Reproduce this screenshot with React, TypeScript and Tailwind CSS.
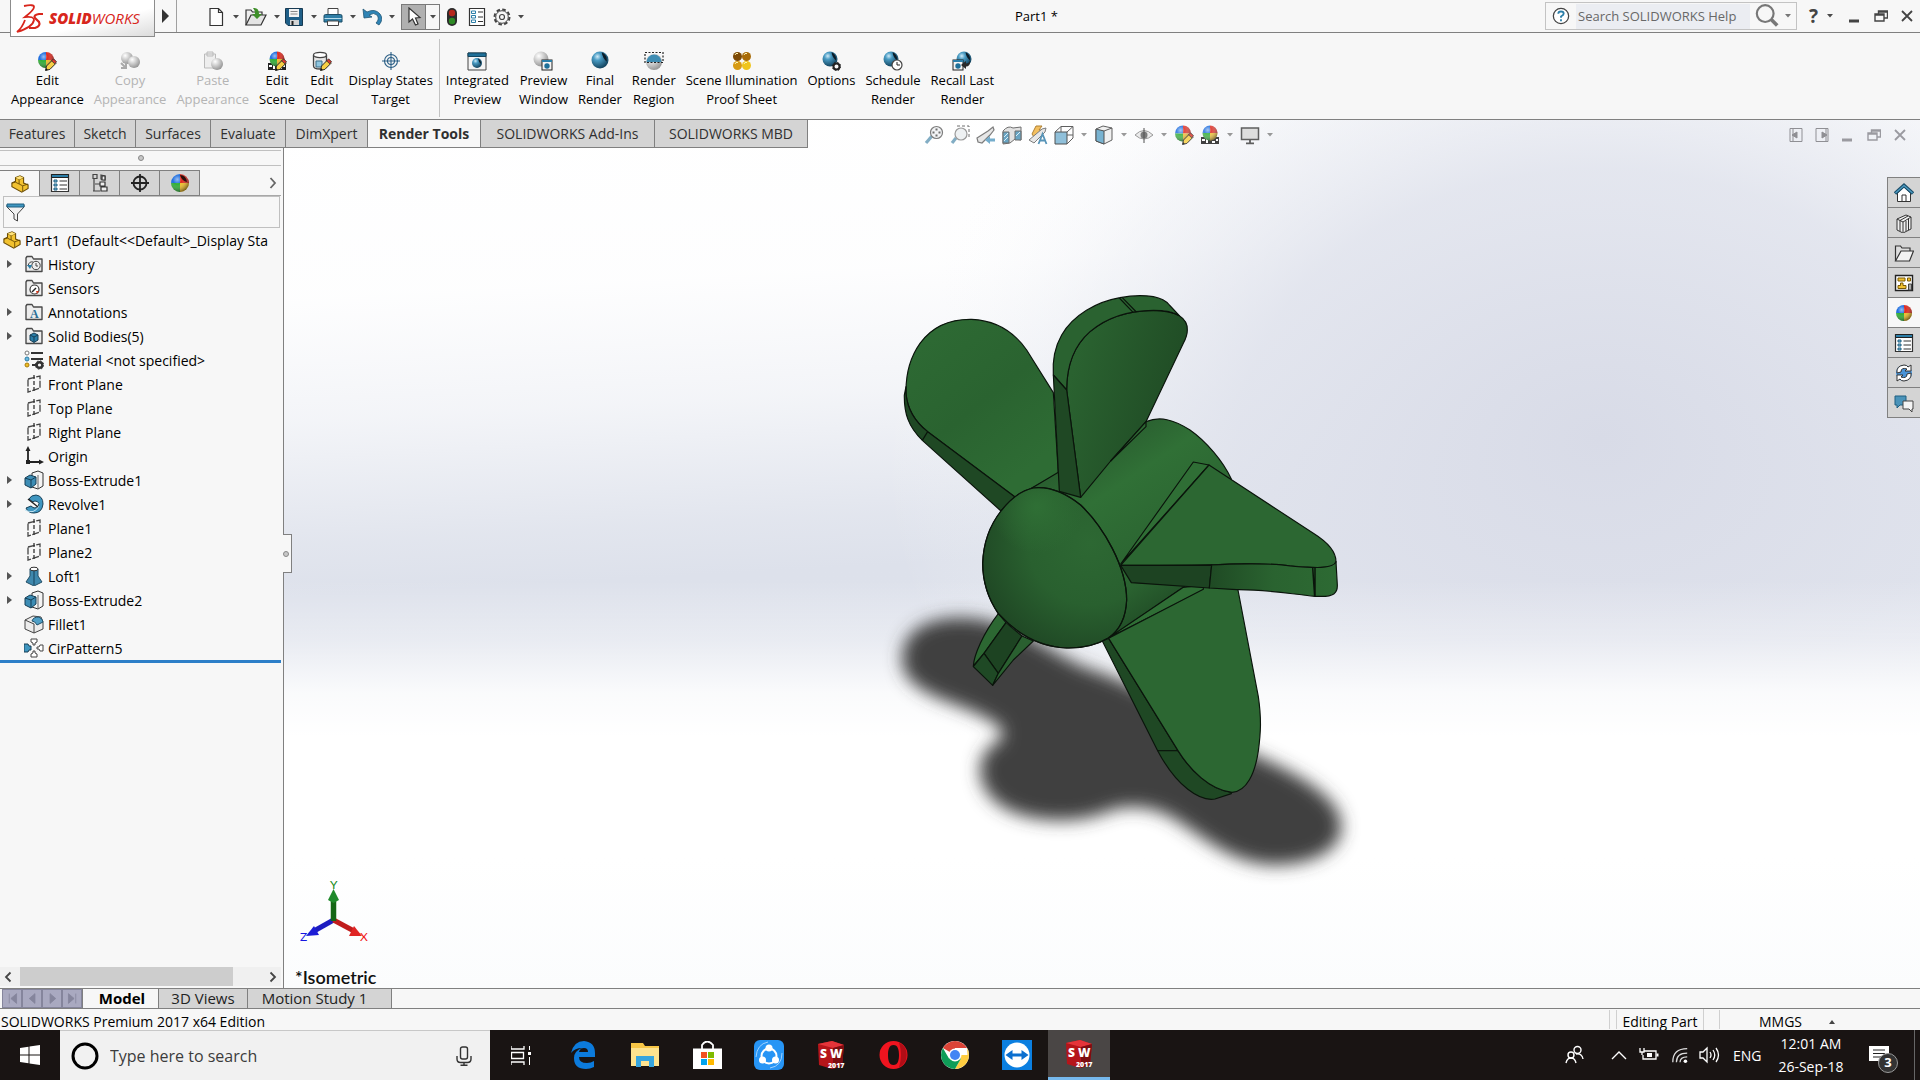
import type { ReactNode } from "react";

type IcoProps = { children: ReactNode; className?: string; box?: string };

const Ico = ({ children, className = "size-5", box = "0 0 20 20" }: IcoProps) => (
  <svg viewBox={box} className={`shrink-0 ${className}`} fill="none" aria-hidden="true">
    {children}
  </svg>
);

const Caret = ({ color = "#4a4a4a" }: { color?: string }) => (
  <svg viewBox="0 0 6 4" className="w-[6px] h-1 shrink-0" aria-hidden="true">
    <path d="M0 0h6L3 3.6z" fill={color} />
  </svg>
);

/* ---------- shared icon parts ---------- */

type BallProps = { cx?: number; cy?: number; r?: number };

const ColorBall = ({ cx = 10, cy = 10, r = 8 }: BallProps) => (
  <g>
    <path d={`M${cx} ${cy}V${cy - r}A${r} ${r} 0 0 0 ${cx - r} ${cy}Z`} fill="#1f6fe0" />
    <path d={`M${cx} ${cy}V${cy - r}A${r} ${r} 0 0 1 ${cx + r} ${cy}Z`} fill="#dd2a20" />
    <path d={`M${cx} ${cy}V${cy + r}A${r} ${r} 0 0 1 ${cx - r} ${cy}Z`} fill="#2fae35" />
    <path d={`M${cx} ${cy}V${cy + r}A${r} ${r} 0 0 0 ${cx + r} ${cy}Z`} fill="#f0bd25" />
    <circle cx={cx} cy={cy} r={r} fill="url(#shade)" />
  </g>
);

const BlueBall = ({ cx = 10, cy = 10, r = 8 }: BallProps) => (
  <g>
    <circle cx={cx} cy={cy} r={r} fill="url(#blueBall)" />
    <path d={`M${cx + r * 0.2} ${cy - r * 0.9}q${r * 0.7} ${r * 0.3} ${r * 0.6} ${r * 1.1}q${-r * 0.5} ${-r * 0.4} ${-r * 0.6} ${-r * 1.1}`} fill="#0b1c28" />
  </g>
);

const GreyBall = ({ cx = 10, cy = 10, r = 8 }: BallProps) => (
  <circle cx={cx} cy={cy} r={r} fill="url(#greyBall)" />
);

const Pencil = () => (
  <g>
    <path d="M8.5 19.5l1-4.5 6-6 3.4 3.4-6 6z" fill="#f7cf45" stroke="#2b2b2b" />
    <path d="M14.6 9.8l2-2 3 3-2 2z" fill="#d93a2f" stroke="#2b2b2b" strokeWidth=".8" />
    <path d="M8.5 19.5l.6-2.4 1.8 1.8z" fill="#111" />
  </g>
);

const MiniWindow = ({ x, y }: { x: number; y: number }) => (
  <g>
    <rect x={x} y={y} width="10" height="10" fill="#f4f4f4" stroke="#222" />
    <path d={`M${x} ${y + 1}h10`} stroke="#2b7ea8" strokeWidth="2" />
    <circle cx={x + 5} cy={y + 6} r="2.7" fill="#1f7099" />
  </g>
);

const Film = () => (
  <g>
    <rect x="1" y="12" width="18" height="7" fill="#222" />
    <path d="M2 14h3v2H2zM6 14h2v4H6zM12 16h3v2h-3zM16 14h2v2h-2z" fill="#fff" />
  </g>
);

const Folder = () => (
  <path d="M2 17.5V4l1-1.5h5L9.5 5H18v12.5z" fill="#ededed" stroke="#4a4a4a" strokeWidth="1.4" strokeLinejoin="round" />
);

/* ---------- ribbon ---------- */

type Command = { lines: string[]; icon: ReactNode; disabled?: boolean };

const editCommands: Command[] = [
  { lines: ["Edit", "Appearance"], icon: <Ico><ColorBall cx={9} cy={9} /><Pencil /></Ico> },
  {
    lines: ["Copy", "Appearance"],
    disabled: true,
    icon: <Ico><GreyBall cx={7} cy={7} r={6} /><GreyBall cx={14} cy={11} r={6} /><path d="M1 12l5 5m0-5v5H1" stroke="#aaa" strokeWidth="2" /></Ico>,
  },
  {
    lines: ["Paste", "Appearance"],
    disabled: true,
    icon: <Ico><path d="M1.500 3h11v14h-11zM4 1h6v4H4z" fill="#eee" stroke="#bbb" /><GreyBall cx={14} cy={13} r={6} /></Ico>,
  },
  { lines: ["Edit", "Scene"], icon: <Ico><Film /><ColorBall cx={10} cy={8} r={7.500} /><Pencil /></Ico> },
  {
    lines: ["Edit", "Decal"],
    icon: (
      <Ico>
        <path d="M1.500 4v11c0 4 13 4 13 0V4" fill="#e6e6e6" stroke="#444" strokeWidth="1.300" />
        <ellipse cx="8" cy="4" rx="6.500" ry="2.600" fill="#fff" stroke="#444" strokeWidth="1.300" />
        <path d="M4 10h6v6H4z" fill="#8fc6e0" stroke="#3b6e88" />
        <Pencil />
      </Ico>
    ),
  },
  {
    lines: ["Display States", "Target"],
    icon: (
      <Ico>
        <g stroke="#2b5f86" strokeWidth="1.100">
          <circle cx="10" cy="10" r="6.500" />
          <circle cx="10" cy="10" r="3.500" />
          <path d="M10 1v18M1 10h18" />
        </g>
      </Ico>
    ),
  },
];

const renderCommands: Command[] = [
  {
    lines: ["Integrated", "Preview"],
    icon: <Ico><path d="M1 2h18v17H1z" fill="#f4f4f4" stroke="#444" /><path d="M1 2h18v3.500H1z" fill="#1f6f98" stroke="#14465f" /><BlueBall cx={10} cy={12} r={5} /></Ico>,
  },
  { lines: ["Preview", "Window"], icon: <Ico><GreyBall cx={8} cy={8} r={7.500} /><MiniWindow x={9} y={9} /></Ico> },
  { lines: ["Final", "Render"], icon: <Ico><BlueBall cy={9} r={8.500} /></Ico> },
  {
    lines: ["Render", "Region"],
    icon: (
      <Ico>
        <GreyBall cy={11} r={8} />
        <path d="M2.500 11a7.500 7.500 0 0 1 15 0z" fill="#3f8db3" />
        <path d="M1 1.500h18v10H1z" stroke="#222" strokeDasharray="2 1.500" strokeWidth="1.200" />
      </Ico>
    ),
  },
  {
    lines: ["Scene Illumination", "Proof Sheet"],
    icon: (
      <Ico>
        <circle cx="5.500" cy="5.500" r="4.500" fill="#7d4a06" />
        <circle cx="14.500" cy="5.500" r="4.500" fill="#a86b08" />
        <circle cx="5.500" cy="14.500" r="4.500" fill="#d79a12" />
        <circle cx="14.500" cy="14.500" r="4.500" fill="#efc51d" />
        <path d="M3 4l1-1.500h2M12 4l1-1.500h2M3 13l1-1.500h2M12 13l1-1.500h2" stroke="#fff3b0" />
      </Ico>
    ),
  },
  {
    lines: ["Options"],
    icon: (
      <Ico>
        <BlueBall cx={9} cy={8} r={7.500} />
        <circle cx="15.500" cy="15.500" r="3" stroke="#222" strokeWidth="2" />
        <circle cx="15.500" cy="15.500" r="4.200" stroke="#222" strokeDasharray="1.600 1.700" />
      </Ico>
    ),
  },
  {
    lines: ["Schedule", "Render"],
    icon: <Ico><BlueBall cx={8} cy={8} r={7.500} /><circle cx="14" cy="14" r="5" fill="#fff" stroke="#444" strokeWidth="1.200" /><path d="M14 11v3h3" stroke="#222" /></Ico>,
  },
  {
    lines: ["Recall Last", "Render"],
    icon: <Ico><BlueBall cx={12} cy={8} r={7.500} /><MiniWindow x={1} y={9} /><path d="M9 14l5-4v2.500q3 0 4-3 .5 6-4 6V18z" fill="#2b2b2b" /></Ico>,
  },
];

const RibbonButton = ({ lines, icon, disabled }: Command) => (
  <button
    disabled={disabled}
    className="flex flex-col items-center text-[13px] leading-[19px] whitespace-nowrap text-black disabled:text-[#b4b4b4]"
  >
    {icon}
    {lines.map((line) => (
      <span key={line}>{line}</span>
    ))}
  </button>
);

/* ---------- title bar ---------- */

const Logo = () => (
  <div className="relative z-10 ml-[10px] flex h-[37px] w-[145px] shrink-0 items-center self-start border border-t-0 border-[#8c8c8c] bg-gradient-to-br from-white from-60% to-[#dcdcdc] pl-[5px] text-[#d8261c]">
    <svg viewBox="0 0 28 30" className="h-[30px] w-7 shrink-0" fill="none" stroke="#d8261c" aria-hidden="true">
      <path d="M8 3q10-2 10 1 0 3-9 10 9-1 9 3-1 7-17 12 5-4 8-12" strokeWidth="1.800" />
      <path d="M27 11h-4q-6 1-4 4l4 4q2 4-4 6h-6" strokeWidth="2.200" />
    </svg>
    <span className="pl-[5px] text-[15px] leading-[20px] italic">
      <b className="font-extrabold">SOLID</b>WORKS
    </span>
  </div>
);

const titleTools: { label: string; icon: ReactNode }[] = [
  {
    label: "New",
    icon: <Ico><path d="M4 1.500h8.500l4 4V18.500H4zM12.500 1.500v4h4" fill="#fdfdfd" stroke="#333" strokeWidth="1.200" /></Ico>,
  },
  {
    label: "Open",
    icon: (
      <Ico className="h-5 w-[22px]" box="0 0 22 20">
        <path d="M1 18V3h5l1.500 2H17v3" fill="#eee" stroke="#333" strokeWidth="1.200" />
        <path d="M1 18L6 8h15l-5 10z" fill="#e4e4e4" stroke="#333" strokeWidth="1.200" />
        <path d="M8 1q6-1 6 6h3l-5 5-5-5h3q0-4-2-6" fill="#3f8f2a" />
      </Ico>
    ),
  },
  {
    label: "Save",
    icon: (
      <Ico>
        <path d="M1.500 1.500h17v17H4l-2.500-2.500z" fill="#1f5f88" stroke="#173a52" />
        <path d="M5 2h10v8H5z" fill="#f3f3f3" />
        <path d="M6.500 4.500h7M6.500 7h7" stroke="#888" />
        <path d="M6 13h9v5H6z" fill="#d5d5d5" />
        <path d="M7.500 14h2v4h-2z" fill="#222" />
      </Ico>
    ),
  },
  {
    label: "Print",
    icon: (
      <Ico>
        <path d="M5 9V1.500h10V9" fill="#fff" stroke="#444" />
        <path d="M1 9q0-1.500 1.500-1.500h15Q19 7.500 19 9v6H1z" fill="#2f7ea6" stroke="#1b4c66" />
        <path d="M1.500 11.500h17" stroke="#b9dcec" />
        <path d="M4.500 14h11v4.500h-11z" fill="#fff" stroke="#444" />
      </Ico>
    ),
  },
  {
    label: "Undo",
    icon: <Ico><path d="M1 2l1 9 8-1-3-2q5-3 8 0 3 4-1 8l3 2q5-6 1-11-5-6-13-2z" fill="#2f84b5" stroke="#1f5675" strokeWidth=".8" /></Ico>,
  },
];

const windowGlyph = {
  min: <path d="M1 13h10" strokeWidth="3" />,
  restore: <path d="M4.500 6V3h9v7h-4M1 6h9v7H1zM1 7h9M5 4h8" strokeWidth="1.400" />,
  close: <path d="M2 3l10 10M12 3L2 13" strokeWidth="1.800" />,
};

const WindowButton = ({ kind, color }: { kind: keyof typeof windowGlyph; color: string }) => (
  <button aria-label={kind}>
    <svg viewBox="0 0 14 16" className="h-4 w-[14px]" fill="none" stroke={color} aria-hidden="true">
      {windowGlyph[kind]}
    </svg>
  </button>
);

const TitleBar = () => (
  <header className="flex h-[33px] shrink-0 items-center border-b border-[#808080] bg-[#f7f7f7]">
    <Logo />
    <button aria-label="Show menu" className="flex h-8 w-[22px] items-center border-r border-[#a0a0a0] pl-[7px]">
      <svg viewBox="0 0 7 14" className="h-[14px] w-[7px]" aria-hidden="true"><path d="M0 0l7 7-7 7z" fill="#333" /></svg>
    </button>
    <div className="flex items-center pt-[1px] pl-[29px]">
      {titleTools.map((tool) => (
        <button key={tool.label} aria-label={tool.label} className="flex w-[39px] items-center gap-[7px]">
          {tool.icon}
          <Caret />
        </button>
      ))}
      <button aria-label="Select" className="flex h-[26px] w-[39px] items-center border border-[#7a7a7a]">
        <span className="flex h-full w-6 items-center justify-center border-r border-[#7a7a7a] bg-[#b0b0b0]">
          <Ico><path d="M5 1v14l3.500-3 3 6 2.500-1-2.500-6 4.500-.5z" fill="#fff" stroke="#333" strokeWidth="1.200" /></Ico>
        </span>
        <span className="flex flex-1 justify-center"><Caret /></span>
      </button>
      <div className="flex items-center gap-[5px] pl-[2px]">
        <button aria-label="Rebuild">
          <Ico>
            <rect x="5" y="1" width="10" height="18" rx="5" fill="#2b2b2b" />
            <circle cx="10" cy="6" r="3.200" fill="#b5261b" />
            <circle cx="10" cy="14" r="3.200" fill="#2d8a24" />
          </Ico>
        </button>
        <button aria-label="File properties">
          <Ico>
            <path d="M2.500 1.500h15v17h-15z" fill="#fff" stroke="#333" strokeWidth="1.200" />
            <path d="M4.500 4h4v2.500h-4zM4.500 8.500h4V11h-4zM4.500 13h4v2.500h-4z" fill="#fff" stroke="#2b7ea8" />
            <path d="M11 5h5M11 10h5M11 14.500h5" stroke="#333" strokeWidth="1.200" />
          </Ico>
        </button>
        <button aria-label="Options" className="flex items-center gap-[6px]">
          <Ico>
            <circle cx="10" cy="10" r="7.500" stroke="#444" strokeWidth="2" strokeDasharray="3.600 2.290" />
            <circle cx="10" cy="10" r="6.300" fill="#f7f7f7" stroke="#444" />
            <circle cx="10" cy="10" r="2.500" stroke="#444" strokeWidth="1.200" />
          </Ico>
          <Caret />
        </button>
      </div>
    </div>
    <h1 className="flex-1 pt-[1px] pl-1 text-center text-[13px] whitespace-pre">Part1 *</h1>
    <div className="flex h-7 w-[252px] items-center border border-[#c3c3c3]">
      <span className="flex w-[30px] justify-center">
        <Ico className="size-[18px]">
          <circle cx="10" cy="10" r="8.500" fill="#fff" stroke="#444" strokeWidth="1.400" />
          <path d="M7 7.500q0-2.500 3-2.500t3 2.500q0 1.500-3 3V12M10 13.500v2.200" stroke="#2b7ea8" strokeWidth="2" />
        </Ico>
      </span>
      <input
        aria-label="Search SOLIDWORKS Help"
        placeholder="Search SOLIDWORKS Help"
        className="h-[25px] w-[174px] bg-[#ebedf2] pl-[2px] text-[13px] text-[#555] outline-none placeholder:text-[#686868]"
      />
      <button aria-label="Search" className="flex flex-1 items-center justify-center gap-[6px]">
        <Ico className="size-6">
          <circle cx="8.500" cy="8" r="7" stroke="#777" strokeWidth="1.800" />
          <path d="M13.500 13l5 5" stroke="#777" strokeWidth="3" />
        </Ico>
        <Caret color="#777" />
      </button>
    </div>
    <button aria-label="Help" className="flex w-[51px] items-center gap-[9px] pl-3 text-[19px] leading-[24px] font-bold text-[#444]">
      ? <Caret />
    </button>
    <div className="flex gap-3 pr-[6px]">
      <WindowButton kind="min" color="#444" />
      <WindowButton kind="restore" color="#444" />
      <WindowButton kind="close" color="#444" />
    </div>
  </header>
);

/* ---------- heads-up view toolbar ---------- */

const hudTools: { label: string; menu?: boolean; icon: ReactNode }[] = [
  {
    label: "Zoom to Fit",
    icon: <Ico><path d="M8 11l-6 7" stroke="#6d9fba" strokeWidth="3.200" /><circle cx="12.500" cy="7.500" r="6" fill="#f1f3f5" stroke="#666" strokeWidth="1.200" /><path d="M12.500 3.500v8M8.500 7.500h8" stroke="#555" strokeDasharray="2 4" strokeWidth="2" /></Ico>,
  },
  {
    label: "Zoom to Area",
    icon: <Ico><path d="M7 1h12v13" stroke="#555" strokeDasharray="3 2" /><path d="M6 13l-4 5" stroke="#6d9fba" strokeWidth="3.200" /><circle cx="11" cy="9" r="6" fill="#eceff1" stroke="#888" strokeWidth="1.200" /></Ico>,
  },
  {
    label: "Previous View",
    icon: <Ico><path d="M1 13l11-7 5-4 1 3-4 5-8 8-4-1z" fill="#e3e3e3" stroke="#666" strokeWidth="1.200" /><path d="M9 15l5-4v2.500h5v3h-5V19z" fill="#5d9fc4" /></Ico>,
  },
  {
    label: "Section View",
    icon: <Ico><path d="M1 6q5-6 10-3l8-1v13l-6-1-5 4-7 1z" fill="#dedede" stroke="#555" /><path d="M1 7h6v11H1zM13 6h6v9h-6z" fill="#4f96ba" stroke="#555" /><path d="M2 12l4-4M2 16l4-4M14 11l4-4" stroke="#d7edf7" /></Ico>,
  },
  {
    label: "Dynamic Annotation",
    icon: <Ico><path d="M4 9l4-8h6l-3 4h3L6 12z" fill="#f2b544" stroke="#a06a10" /><path d="M1 15l13-11 4-1-1 4-11 11z" fill="#e3e3e3" stroke="#666" /><path d="M10.500 19l4-10 4 10M12 15.500h5" stroke="#3b82ac" strokeWidth="1.800" /></Ico>,
  },
  {
    label: "View Orientation",
    menu: true,
    icon: <Ico><path d="M1 7h12v12H1z" fill="#7db6d4" stroke="#333" /><path d="M1 7l6-5.500h12V13l-6 6M13 7l6-5.500M7 2v5M13 10h6" stroke="#444" /></Ico>,
  },
  {
    label: "Display Style",
    menu: true,
    icon: <Ico><path d="M2 4l7-3 9 2v12l-8 4-8-3z" fill="#eee" stroke="#444" /><path d="M2 4l8 2v13l-8-3z" fill="#62a7ca" stroke="#333" /><path d="M10 6l8-3" stroke="#444" /></Ico>,
  },
  {
    label: "Hide/Show Items",
    menu: true,
    icon: <Ico><path d="M1 10q9-9 18 0-9 8-18 0z" fill="#e8e8e8" stroke="#888" /><circle cx="10" cy="10" r="3.500" fill="#666" /><path d="M10 3v15" stroke="#333" /></Ico>,
  },
  { label: "Edit Appearance", icon: <Ico><ColorBall cx={9} cy={8.500} r={8} /><Pencil /></Ico> },
  { label: "Apply Scene", menu: true, icon: <Ico><Film /><ColorBall cx={10} cy={8} r={7.500} /></Ico> },
  {
    label: "View Settings",
    menu: true,
    icon: <Ico><path d="M1.500 3h17v11.500h-17z" fill="#d9d9d9" stroke="#444" strokeWidth="1.500" /><path d="M10 15v3M6 18.300h8" stroke="#444" strokeWidth="1.800" /></Ico>,
  },
];

const commandTabs = [
  { label: "Features", width: "w-[75px]" },
  { label: "Sketch", width: "w-[61px]" },
  { label: "Surfaces", width: "w-[75px]" },
  { label: "Evaluate", width: "w-[75px]" },
  { label: "DimXpert", width: "w-[82px]" },
  { label: "Render Tools", width: "w-[113px]", active: true },
  { label: "SOLIDWORKS Add-Ins", width: "w-[174px]" },
  { label: "SOLIDWORKS MBD", width: "w-[153px]" },
];

const TabRow = () => (
  <div className="relative flex h-7 shrink-0">
    <nav className="flex shrink-0 border-b border-[#808080] text-[14px] text-[#303030]">
      {commandTabs.map((tab) => (
        <button
          key={tab.label}
          className={`border-r border-[#808080] whitespace-nowrap ${tab.width} ${tab.active ? "bg-[#f7f7f7] font-bold" : "bg-[#d4d4d4]"}`}
        >
          {tab.label}
        </button>
      ))}
    </nav>
    <div className="flex flex-1 items-center gap-[6px] pt-[2px] pl-[116px] opacity-85">
      {hudTools.map((tool) => (
        <button key={tool.label} aria-label={tool.label} className="flex items-center gap-[6px]">
          {tool.icon}
          {tool.menu && <span className="flex w-2 justify-center"><Caret color="#888" /></span>}
        </button>
      ))}
    </div>
    <div className="flex items-center gap-3 pt-[2px] pr-[13px]">
      <button aria-label="Collapse left pane">
        <svg viewBox="0 0 14 16" className="h-4 w-[14px]" fill="none" stroke="#8f8f94" aria-hidden="true"><path d="M1 1.500h12v13H1zM4 2v12" /><path d="M8 5v6L3 8z" fill="#8f8f94" /></svg>
      </button>
      <button aria-label="Collapse right pane">
        <svg viewBox="0 0 14 16" className="h-4 w-[14px]" fill="none" stroke="#8f8f94" aria-hidden="true"><path d="M1 1.500h12v13H1zM11 2v12" /><path d="M7 5v6l5-3z" fill="#8f8f94" /></svg>
      </button>
      <WindowButton kind="min" color="#9a9aa0" />
      <WindowButton kind="restore" color="#9a9aa0" />
      <WindowButton kind="close" color="#9a9aa0" />
    </div>
  </div>
);

/* ---------- feature tree ---------- */

const planeIcon = (
  <Ico><path d="M4 5l12-3v12L4 18z" stroke="#444" strokeWidth="1.300" strokeDasharray="7 1.500" /><path d="M10 1v18" stroke="#333" strokeDasharray="4 2" strokeWidth="1.300" /></Ico>
);

const extrudeIcon = (
  <Ico>
    <path d="M8 3l6-2 5 2v13l-5 3-6-2z" fill="#f4f4f4" stroke="#333" />
    <path d="M14 5v13" stroke="#666" />
    <path d="M1 8l5-3 6 2v7l-5 4-6-3z" fill="#3d8db5" stroke="#173f56" />
    <path d="M1 8l6 2 5-3M7 10v8" stroke="#173f56" />
  </Ico>
);

const partIcon = (
  <Ico className="size-[18px]">
    <path d="M1 9l4-2V3l5-2 4 2v6l5 2v4l-7 4L1 13z" fill="#f2c230" stroke="#6b4d05" strokeWidth="1.200" />
    <path d="M5 3l4 2 5-2M9 5v5l-4-2M9 10l4 2 6-2M13 12v6M1 9l4-1" stroke="#6b4d05" />
    <path d="M5 3l5-2 4 2-5 2z" fill="#ffe27a" />
  </Ico>
);

const treeItems: { label: string; icon: ReactNode; open?: boolean }[] = [
  {
    label: "History",
    open: true,
    icon: <Ico><Folder /><circle cx="12" cy="11.500" r="4.200" stroke="#444" /><path d="M12 9v3h2M4 12q1-5 5-4" stroke="#444" /><path d="M3 11l3 4 2-4z" fill="#2b7ea8" /></Ico>,
  },
  {
    label: "Sensors",
    icon: <Ico><Folder /><circle cx="10.500" cy="11.500" r="4.500" fill="#fff" stroke="#333" strokeWidth="1.200" /><path d="M8 14l4-4" stroke="#222" strokeWidth="1.500" /><path d="M12 13l3 0-2 3z" fill="#d93a1f" /></Ico>,
  },
  { label: "Annotations", open: true, icon: <Ico><Folder /><text x="6" y="16" fontSize="12" fontWeight="700" fontFamily="Liberation Serif, serif" fill="#2b6f96">A</text></Ico> },
  {
    label: "Solid Bodies(5)",
    open: true,
    icon: <Ico><Folder /><path d="M6 9l4-2 4 2v5l-4 2.500L6 14z" fill="#2b7ea8" stroke="#173f56" /><path d="M6 9l4 2 4-2M10 11v5" stroke="#173f56" /></Ico>,
  },
  {
    label: "Material <not specified>",
    icon: (
      <Ico>
        <path d="M7 3h12M7 9h12M8 15h5" stroke="#333" strokeWidth="2" />
        <circle cx="3" cy="3" r="2" fill="#fff" stroke="#777" />
        <circle cx="3" cy="9" r="2" fill="#6db9dd" stroke="#2b7ea8" />
        <circle cx="3" cy="15" r="2" fill="#f0bd25" stroke="#a87d0a" />
        <circle cx="15.500" cy="15" r="2.800" stroke="#333" strokeWidth="2.400" />
        <circle cx="15.500" cy="15" r="4.200" stroke="#333" strokeDasharray="1.600 1.700" />
      </Ico>
    ),
  },
  { label: "Front Plane", icon: planeIcon },
  { label: "Top Plane", icon: planeIcon },
  { label: "Right Plane", icon: planeIcon },
  {
    label: "Origin",
    icon: <Ico><path d="M4 4v12h12" stroke="#222" strokeWidth="1.800" /><path d="M4 0l2.500 5h-5zM20 16l-5-2.500v5z" fill="#222" /><path d="M2 14h4v4H2z" fill="#222" /></Ico>,
  },
  { label: "Boss-Extrude1", open: true, icon: extrudeIcon },
  {
    label: "Revolve1",
    open: true,
    icon: (
      <Ico>
        <path d="M5 5q2-4 7-4 7 1 7 9-1 9-9 9-6 0-8-5l5-2q2 2 4 2 4-1 4-4.500-1-2.500-4-2.500-1 0-2 1z" fill="#3f96c0" stroke="#173f56" />
        <path d="M1 16q9 5 14-4" stroke="#bfe3f2" />
        <path d="M4 5l10 8" stroke="#222" strokeWidth="1.500" />
      </Ico>
    ),
  },
  { label: "Plane1", icon: planeIcon },
  { label: "Plane2", icon: planeIcon },
  {
    label: "Loft1",
    open: true,
    icon: <Ico><path d="M6 3h8v7l4 6-8 4-8-4 4-6z" fill="#3f88ad" stroke="#244f66" /><path d="M10 4v15" stroke="#2a6483" strokeWidth="2" /><ellipse cx="10" cy="3" rx="4" ry="1.800" fill="#fff" stroke="#333" /></Ico>,
  },
  { label: "Boss-Extrude2", open: true, icon: extrudeIcon },
  {
    label: "Fillet1",
    icon: (
      <Ico>
        <path d="M1 6l8-4 8 1 2 5v7l-9 4-9-4z" fill="#ececec" stroke="#444" />
        <path d="M8 7q1-4 7-4 4 2 4 5l-6 3q-2-4-5-4z" fill="#4f9fc6" stroke="#1f4f69" />
        <path d="M1 6l9 4v9" stroke="#444" />
      </Ico>
    ),
  },
  {
    label: "CirPattern5",
    icon: (
      <Ico>
        <path d="M7 1h6v3l-2 1v2H9V5L7 4zM7 19h6v-3l-2-1v-2H9v2l-2 1zM19 7v6h-3l-1-2h-2V9h2l1-2z" fill="#fff" stroke="#444" />
        <path d="M0 6h4l1 2h2v4H5l-1 2H0z" fill="#3f96c0" stroke="#173f56" />
      </Ico>
    ),
  },
];

const listWindow = (
  <Ico>
    <path d="M1.500 1.500h17v17h-17z" fill="#fff" stroke="#333" strokeWidth="1.200" />
    <path d="M1.500 1.500h17v3h-17z" fill="#2b7ea8" stroke="#222" />
    <path d="M4 7h3v2H4zM4 11h3v2H4zM4 15h3v2H4z" fill="#7fc0de" stroke="#1f5f80" />
    <path d="M9.500 8H17M9.500 12H17M9.500 16H17" stroke="#333" />
  </Ico>
);

const managerTabs: { label: string; icon: ReactNode }[] = [
  { label: "PropertyManager", icon: listWindow },
  {
    label: "ConfigurationManager",
    icon: <Ico><path d="M3 1.500h4v4H3zM4 6v12M3 18h7M5 11h5M11 2l4 1v4l-4-1z" stroke="#444" strokeWidth="1.200" /><path d="M10 9h5v4h-5zM11 14h6v4h-6zM12 3h3v4h-3z" fill="#eee" stroke="#333" strokeWidth="1.200" /></Ico>,
  },
  { label: "DimXpertManager", icon: <Ico><circle cx="10" cy="10" r="6.500" stroke="#222" strokeWidth="1.800" /><path d="M10 1v18M1 10h18" stroke="#222" strokeWidth="1.800" /></Ico> },
  { label: "DisplayManager", icon: <Ico><ColorBall r={9} /><path d="M10 2q6 0 7 7-5-1-7-7" fill="#2a0f0c" /></Ico> },
];

const FeaturePanel = () => (
  <aside className="relative flex w-[284px] shrink-0 flex-col border-r border-[#808080] bg-[#f7f7f7]">
    <div className="mt-[2px] mr-[2px] flex h-4 shrink-0 items-center justify-center border-y border-[#c0c0c0]">
      <span className="size-[6px] rounded-full border border-[#888] bg-[#c8c8c8]" />
    </div>
    <div className="mt-1 mr-[2px] flex h-[26px] shrink-0">
      <button aria-label="FeatureManager" className="flex w-10 items-center justify-center border-t border-r border-[#808080]">{partIcon}</button>
      {managerTabs.map((tab) => (
        <button key={tab.label} aria-label={tab.label} className="flex w-10 items-center justify-center border-y border-r border-[#808080] bg-[#d4d4d4]">
          {tab.icon}
        </button>
      ))}
      <button aria-label="More tabs" className="flex flex-1 items-center justify-end border-b border-[#a8a8a8] pr-1">
        <svg viewBox="0 0 8 12" className="h-3 w-2" fill="none" aria-hidden="true"><path d="M1.500 1L6 6l-4.500 5" stroke="#666" strokeWidth="1.800" /></svg>
      </button>
    </div>
    <label className="mx-[3px] flex h-8 shrink-0 items-center border border-[#c0c0c0] pl-[2px]">
      <Ico><path d="M1 3h17v2l-6.500 7v7L8 17v-5L1 5z" fill="#f1f1f1" stroke="#444" /><path d="M1 2h17v3H1z" fill="#3f96c0" stroke="#1f5f80" /></Ico>
      <input aria-label="Filter" className="min-w-0 flex-1 bg-transparent outline-none" />
    </label>
    <div className="mr-[2px] flex flex-1 flex-col overflow-hidden text-[14px] text-black">
      <div className="flex h-6 shrink-0 items-center gap-1 pl-[3px] whitespace-pre">
        {partIcon}
        <span>{"Part1  (Default<<Default>_Display Sta"}</span>
      </div>
      <ul className="border-b-[3px] border-[#2d7fc8]">
        {treeItems.map((item) => (
          <li key={item.label} className="flex h-6 items-center">
            <span className="w-6 pl-[7px]">
              {item.open && <svg viewBox="0 0 5 8" className="h-2 w-[5px]" aria-hidden="true"><path d="M0 0l5 4-5 4z" fill="#555" /></svg>}
            </span>
            {item.icon}
            <span className="pl-1 whitespace-nowrap">{item.label}</span>
          </li>
        ))}
      </ul>
    </div>
    <div className="mr-[2px] mb-[2px] flex h-[19px] shrink-0 items-center bg-[#f0f0f0]">
      <button aria-label="Scroll left" className="flex w-5 pl-1">
        <svg viewBox="0 0 8 12" className="h-3 w-2" fill="none" aria-hidden="true"><path d="M6.500 1.500L2 6l4.500 4.500" stroke="#444" strokeWidth="1.800" /></svg>
      </button>
      <div className="h-full w-[213px] bg-[#cdcdcd]" />
      <button aria-label="Scroll right" className="ml-auto flex w-4 justify-center">
        <svg viewBox="0 0 8 12" className="h-3 w-2" fill="none" aria-hidden="true"><path d="M1.500 1.500L6 6l-4.500 4.500" stroke="#444" strokeWidth="1.800" /></svg>
      </button>
    </div>
    <button
      aria-label="Collapse panel"
      className="absolute top-[386px] -right-[9px] flex h-[39px] w-[9px] items-center border border-l-0 border-[#808080] bg-[#f7f7f7]"
    >
      <span className="size-[6px] rounded-full border border-[#888] bg-[#c8c8c8]" />
    </button>
  </aside>
);

/* ---------- 3D scene ---------- */

const Scene = () => (
  <svg viewBox="0 120 1920 868" preserveAspectRatio="xMidYMid slice" className="absolute inset-0 h-full w-full" role="img" aria-label="Propeller model">
    <defs>
      <radialGradient id="shade" cx=".35" cy=".3" r=".75">
        <stop offset="0" stopColor="#fff" stopOpacity=".55" />
        <stop offset=".35" stopColor="#fff" stopOpacity="0" />
        <stop offset="1" stopColor="#000" stopOpacity=".55" />
      </radialGradient>
      <radialGradient id="blueBall" cx=".35" cy=".3" r=".75">
        <stop offset="0" stopColor="#cfeaf7" />
        <stop offset=".3" stopColor="#4a9cc4" />
        <stop offset="1" stopColor="#0f3d57" />
      </radialGradient>
      <radialGradient id="greyBall" cx=".35" cy=".3" r=".8">
        <stop offset="0" stopColor="#fff" />
        <stop offset="1" stopColor="#8a8a8a" />
      </radialGradient>
      <linearGradient id="bgRow" x1="0" y1="0" x2=".12" y2="1">
        <stop offset="0" stopColor="#dfe2ec" stopOpacity="0" />
        <stop offset=".22" stopColor="#dfe2ec" stopOpacity=".05" />
        <stop offset=".36" stopColor="#dde1eb" stopOpacity=".35" />
        <stop offset=".5" stopColor="#dde1eb" stopOpacity=".85" />
        <stop offset=".56" stopColor="#dde1eb" />
        <stop offset="1" stopColor="#dfe3ec" />
      </linearGradient>
      <radialGradient id="bgGlow" gradientUnits="userSpaceOnUse" cx="1600" cy="440" r="720" gradientTransform="matrix(1 0 0 .75 0 110)">
        <stop offset="0" stopColor="#d8dbe7" />
        <stop offset=".5" stopColor="#dfe2ec" stopOpacity=".85" />
        <stop offset=".75" stopColor="#e4e7ef" stopOpacity=".35" />
        <stop offset="1" stopColor="#fff" stopOpacity="0" />
      </radialGradient>
      <linearGradient id="floor" x1="0" y1="0" x2="0" y2="1">
        <stop offset=".53" stopColor="#fff" stopOpacity="0" />
        <stop offset=".6" stopColor="#fff" stopOpacity=".35" />
        <stop offset=".66" stopColor="#fff" stopOpacity=".85" />
        <stop offset=".71" stopColor="#fff" />
        <stop offset=".85" stopColor="#fff" />
        <stop offset="1" stopColor="#fbfcfd" />
      </linearGradient>
      <radialGradient id="dome" gradientUnits="userSpaceOnUse" cx="600" cy="790" r="370">
        <stop offset="0" stopColor="#2d6833" />
        <stop offset=".5" stopColor="#29602f" />
        <stop offset="1" stopColor="#1e4423" />
      </radialGradient>
      <radialGradient id="domeTop" gradientUnits="userSpaceOnUse" cx="440" cy="680" r="140">
        <stop offset="0" stopColor="#2f6f35" />
        <stop offset="1" stopColor="#2f6f35" stopOpacity="0" />
      </radialGradient>
      <linearGradient id="hub" gradientUnits="userSpaceOnUse" x1="540" y1="560" x2="860" y2="1040">
        <stop offset="0" stopColor="#2a6030" />
        <stop offset=".22" stopColor="#307036" />
        <stop offset=".7" stopColor="#2a6230" />
        <stop offset="1" stopColor="#1c4221" />
      </linearGradient>
      <linearGradient id="faceTop" gradientUnits="userSpaceOnUse" x1="540" y1="300" x2="820" y2="380">
        <stop offset="0" stopColor="#2a6230" />
        <stop offset="1" stopColor="#214e26" />
      </linearGradient>
      <linearGradient id="faceLeft" gradientUnits="userSpaceOnUse" x1="120" y1="180" x2="420" y2="560">
        <stop offset="0" stopColor="#2d6933" />
        <stop offset=".5" stopColor="#2a6330" />
        <stop offset="1" stopColor="#2e6c34" />
      </linearGradient>
      <linearGradient id="rim" gradientUnits="userSpaceOnUse" x1="960" y1="0" x2="1340" y2="0">
        <stop offset="0" stopColor="#1f4a24" />
        <stop offset=".5" stopColor="#2a6330" />
        <stop offset="1" stopColor="#2d6a33" />
      </linearGradient>
      <filter id="soft" x="-20%" y="-20%" width="140%" height="140%">
        <feGaussianBlur stdDeviation="25" />
      </filter>
    </defs>
    <rect x="0" y="120" width="1920" height="868" fill="#fff" />
    <rect x="0" y="120" width="1920" height="868" fill="url(#bgRow)" />
    <rect x="0" y="120" width="1920" height="868" fill="url(#bgGlow)" />
    <rect x="0" y="120" width="1920" height="868" fill="url(#floor)" />
    <g transform="translate(890 280) scale(.33333)">
      <path
        d="M38 1120C50 1025 170 1000 280 1020C400 1045 480 1115 580 1160C700 1200 860 1270 1000 1380C1120 1440 1265 1490 1335 1580C1400 1690 1290 1755 1150 1755C1020 1750 940 1670 850 1615C790 1580 720 1572 660 1592C560 1635 410 1630 330 1575C265 1530 250 1450 300 1400C360 1365 350 1345 270 1305C180 1260 20 1235 38 1120Z"
        fill="#404040"
        filter="url(#soft)"
      />
      <g stroke="#0a140b" strokeWidth="3.500" strokeLinejoin="round" fill="#2c6732">
        <path d="M48 340C47 290 58 235 90 190C130 135 185 117 245 118C320 121 375 160 410 210L490 338L505 580L422 626L376 652L113 455C75 425 52 390 48 340Z" fill="url(#faceLeft)" />
        <path d="M48 320L43 345C42 400 55 440 97 481L333 693L376 652L113 455C75 425 52 390 48 340Z" fill="#1f4824" />
        <path d="M113 455L97 481" />
        <path d="M422 626L500 580L768 425C810 408 850 418 900 450C950 485 1000 545 1024 597L1030 800L880 922L660 1073L540 1100Z" fill="url(#hub)" />
        <path d="M325 1001C280 1060 252 1125 250 1158L282 1120L348 1028Z" />
        <path d="M348 1028L396 1068L325 1180L282 1120Z" fill="#1d4322" />
        <path d="M250 1160L282 1120L325 1180L308 1216Z" fill="#1f4925" />
        <path d="M396 1068L430 1083L370 1140L308 1216L325 1180Z" fill="#2a6030" />
        <path d="M637 1083L656 1075L864 1412C900 1470 960 1530 1024 1537L1024 1541L975 1557C930 1565 860 1520 803 1412Z" fill="#1f4824" />
        <path d="M803 1412H864" />
        <path d="M656 1073L880 922L940 915L948 926Z" fill="#2f6e35" />
        <path d="M656 1075L940 928V915H1040L1044 930L1105 1250C1115 1320 1112 1360 1105 1413C1095 1480 1070 1535 1026 1537C960 1530 900 1470 864 1412Z" />
        <path d="M333 693C355 665 390 632 430 624C480 618 530 642 572 675C640 740 710 860 710 960C708 1010 690 1050 655 1074C620 1095 580 1105 530 1104C440 1100 370 1050 325 1001C290 950 278 900 278 850C280 790 300 735 333 693Z" fill="url(#dome)" />
        <path d="M333 693C355 665 390 632 430 624C480 618 530 642 572 675C640 740 710 860 710 960C708 1010 690 1050 655 1074C620 1095 580 1105 530 1104C440 1100 370 1050 325 1001C290 950 278 900 278 850C280 790 300 735 333 693Z" fill="url(#domeTop)" />
        <path d="M530 330C530 240 560 190 600 155C650 112 720 92 790 91C830 92 850 98 868 107C885 118 893 130 892 150C892 165 888 175 880 190L768 425L662 543L572 652Z" fill="url(#faceTop)" />
        <path d="M768 425V440L662 543Z" />
        <path d="M490 285C487 240 495 200 515 165C550 105 620 65 690 53C720 47 760 45 790 50C815 55 830 65 838 75L868 107C850 95 830 91 790 91C720 92 650 112 600 155C560 190 530 240 530 330Z" fill="#2a6230" />
        <path d="M490 285L530 330L572 652L508 634Z" fill="#1f4824" />
        <path d="M688 54L730 98M697 53L739 96" />
        <path d="M692 852L910 546L957 555Z" fill="#2f6e35" />
        <path d="M692 856L957 555L1270 760C1310 785 1338 815 1338 845C1336 862 1310 865 1270 862C1200 860 1150 850 1060 851C1010 853 960 856 692 856Z" />
        <path d="M692 856H965L958 924L724 908Z" fill="#1d4322" />
        <path d="M965 855C1010 852 1150 848 1200 858C1270 864 1330 868 1338 845L1342 915C1343 940 1330 950 1290 949H1275C1200 942 1130 928 1040 929L958 924Z" fill="url(#rim)" />
        <path d="M1268 862L1274 949M1275 862V949" strokeWidth="4.500" />
      </g>
    </g>
  </svg>
);

const Triad = () => (
  <svg viewBox="0 0 70 68" className="ml-[5px] h-[68px] w-[70px]" aria-hidden="true">
    <g fontFamily="Lato, sans-serif" fontSize="12">
      <text x="30" y="12" fill="#138a13">Y</text>
      <text x="0" y="64" fill="#1616e0">Z</text>
      <text x="60" y="64" fill="#f01414">X</text>
    </g>
    <path d="M33.500 43L14 54" stroke="#1c1cc0" strokeWidth="5" />
    <path d="M6 59l8-10 5 9z" fill="#1c1cd6" />
    <path d="M33.500 43L54 54" stroke="#c01c1c" strokeWidth="5" />
    <path d="M62 59l-13 0 5-10z" fill="#e02424" />
    <path d="M33.500 44V22" stroke="#156615" strokeWidth="5.500" />
    <path d="M33.500 12l5.500 11-5.500 3-5.500-3z" fill="#1f8a2b" />
  </svg>
);

const taskPane: { label: string; icon: ReactNode }[] = [
  {
    label: "Resources",
    icon: <Ico><path d="M3.500 10v8.500h13V10L10 4z" fill="#fff" stroke="#333" /><path d="M8 18v-6h4v6" fill="#fff" stroke="#333" /><path d="M1 10.500l9-8 9 8" stroke="#1c4f6b" strokeWidth="3.600" /><path d="M1.500 10l8.500-7.500 8.500 7.500" stroke="#4f9fc6" strokeWidth="1.200" /></Ico>,
  },
  {
    label: "Design Library",
    icon: <Ico><path d="M3 6l9-4 5 2v12l-8 4-6-3z" fill="#f0f0f0" stroke="#333" /><path d="M3 6l3 1.500V18M6 7.500l8-4.500M6 7.500L9 9v10M9 9l8-5M12 8v10M14.500 6v11" stroke="#333" /></Ico>,
  },
  { label: "File Explorer", icon: <Ico><path d="M1.500 18V3h5L8 5h8v4" fill="#ddd" stroke="#333" strokeWidth="1.200" /><path d="M1.500 18L7 8h12.500l-4 10z" fill="#f2f2f2" stroke="#333" strokeWidth="1.200" /></Ico> },
  {
    label: "View Palette",
    icon: <Ico><path d="M1.500 2.500h17v15h-17z" fill="#fff" stroke="#222" strokeWidth="1.400" /><path d="M4 5h7v3H4zM13.500 5h3v3h-3zM4 15.500v-3h2.500V10H9v2.500h3v3z" fill="#f2c230" stroke="#7a5a06" /><path d="M14.500 11h3v6h-3z" fill="#aaa" stroke="#444" /></Ico>,
  },
  { label: "Appearances", icon: <Ico><ColorBall cy={10} r={8} /></Ico> },
  { label: "Custom Properties", icon: listWindow },
  {
    label: "Forum",
    icon: (
      <Ico>
        <circle cx="10" cy="10" r="8" fill="#4a93d6" />
        <path d="M3 10q-1-7 7-8 3 0 4 2l3-2v6h-6l2-2q-6-2-6 3zM17 10q1 7-7 8-3 0-4-2l-3 2v-6h6l-2 2q6 2 6-3z" fill="#fff" stroke="#333" />
      </Ico>
    ),
  },
  {
    label: "Comments",
    icon: <Ico><path d="M1 3h11v9H6l-3 3v-3H1z" fill="#4a93b9" stroke="#1f5f80" /><path d="M9 8h10v8h-1v3l-3-3H9z" fill="#f4f4f4" stroke="#444" /></Ico>,
  },
];

const Workspace = () => (
  <div className="flex min-h-0 flex-1">
    <FeaturePanel />
    <main className="relative flex flex-1 flex-col justify-end pl-[11px]">
      <Triad />
      <p className="pt-[21px] font-['Lato'] text-[18px] leading-[22px] font-semibold text-[#111]">*Isometric</p>
    </main>
    <nav className="relative mt-[29px] flex w-[33px] flex-col self-start border-b border-l border-[#808080]">
      {taskPane.map((item) => (
        <button
          key={item.label}
          aria-label={item.label}
          className={`flex h-[30px] items-center justify-center border-t border-[#808080] ${item.label === "Appearances" ? "bg-[#f7f7f7]" : "bg-[#d4d4d4]"}`}
        >
          {item.icon}
        </button>
      ))}
    </nav>
  </div>
);

/* ---------- bottom ---------- */

const navGlyphs = [
  { label: "First", d: "M4 2v12M13 2v12L6 8z" },
  { label: "Previous", d: "M11 2v12L4 8z" },
  { label: "Next", d: "M5 2v12l7-6z" },
  { label: "Last", d: "M12 2v12M3 2v12l7-6z" },
];

const BottomTabs = () => (
  <div className="relative flex h-[21px] shrink-0 border-y border-[#808080] bg-[#f7f7f7] text-[15px] leading-[19px]">
    <div className="flex w-[83px] border-r border-[#808080] pl-[2px]">
      {navGlyphs.map((nav) => (
        <button key={nav.label} aria-label={nav.label} className="flex w-5 items-center justify-center border border-[#85859c] bg-[#a9a9c0]">
          <svg viewBox="0 0 16 16" className="size-[13px]" aria-hidden="true"><path d={nav.d} fill="#85859c" stroke="#85859c" /></svg>
        </button>
      ))}
    </div>
    <button className="w-[76px] border-r border-[#808080] pl-[3px] font-bold">Model</button>
    <button className="w-[89px] border-r border-[#808080] bg-[#d4d4d4] text-[#222]">3D Views</button>
    <button className="w-36 border-r border-[#808080] bg-[#d4d4d4] pr-[10px] text-[#222]">Motion Study 1</button>
  </div>
);

const StatusBar = () => (
  <footer className="flex h-[21px] shrink-0 items-center overflow-hidden bg-[#f7f7f7] pl-[1px] text-[14px] leading-[21px] text-black">
    <span className="flex-1 pt-1">SOLIDWORKS Premium 2017 x64 Edition</span>
    <span className="h-[19px] w-2 border-x border-[#d0d0d0]" />
    <span className="w-[87px] border-r border-[#d0d0d0] pt-1 text-center leading-[19px]">Editing Part</span>
    <span className="h-[19px] w-4 border-r border-[#d0d0d0]" />
    <button className="flex w-[200px] items-center gap-[27px] pt-1 pl-[39px]">
      MMGS
      <svg viewBox="0 0 6 4" className="h-1 w-[6px]" aria-hidden="true"><path d="M0 4h6L3 0z" fill="#444" /></svg>
    </button>
  </footer>
);

const swCube = (
  <svg viewBox="0 0 30 30" className="size-[30px]" aria-hidden="true">
    <path d="M2 4l14-3 12 4-2 21-10 3-13-4z" fill="#b5151a" />
    <path d="M2 4l14-3 12 4-11 3z" fill="#e5343a" />
    <path d="M17 8l11-3-2 21-9 3z" fill="#7c0d11" />
    <text x="4" y="18" fontSize="12" fontWeight="800" fill="#fff">S</text>
    <text x="14" y="18" fontSize="12" fontWeight="800" fill="#fff">W</text>
    <text x="12" y="28" fontSize="7" fontWeight="800" fill="#fff">2017</text>
  </svg>
);

const taskbarApps: { label: string; icon: ReactNode; active?: boolean }[] = [
  {
    label: "Task View",
    icon: <Ico className="size-5"><path d="M0 4V1M0 4h13V1M.5 7.500h12v6H.5zM0 20v-3h13v3" stroke="#fff" strokeWidth="1.300" /><path d="M18.500 1v4M18.500 12v8" stroke="#fff" /><path d="M17 7h3v3h-3z" fill="#fff" /></Ico>,
  },
  {
    label: "Edge",
    icon: (
      <Ico className="h-7 w-6" box="0 0 24 28">
        <path d="M0 12Q3 0 13 0q11 1 11 12v4H8q0 6 8 6 4 0 7-2v6q-4 2-8 2Q3 28 3 17q0-7 8-10Q4 7 0 12zM8 11h9q0-4-4-4t-5 4z" fill="#0c7bdc" />
      </Ico>
    ),
  },
  {
    label: "File Explorer",
    icon: <Ico className="h-6 w-7" box="0 0 28 24"><path d="M0 0h12l2 3h14v20H0z" fill="#f7c646" /><path d="M0 5h28v18H0z" fill="#fde38f" /><path d="M5 13h18v11h-5v-6h-8v6H5z" fill="#36a5de" /></Ico>,
  },
  {
    label: "Store",
    icon: (
      <Ico className="size-[29px]" box="0 0 29 29">
        <path d="M9 8V4q5-7 11 0v4" stroke="#fff" strokeWidth="1.800" />
        <path d="M0 7.500h29V28H0z" fill="#fff" />
        <path d="M8 11h6v6H8z" fill="#f25022" /><path d="M15 11h6v6h-6z" fill="#7fba00" />
        <path d="M8 18h6v6H8z" fill="#00a4ef" /><path d="M15 18h6v6h-6z" fill="#ffb900" />
      </Ico>
    ),
  },
  {
    label: "SHAREit",
    icon: (
      <Ico className="size-[30px]" box="0 0 30 30">
        <rect width="30" height="30" rx="6" fill="#2795f5" />
        <circle cx="15" cy="16" r="7.500" stroke="#fff" strokeWidth="2" />
        <path d="M2 17Q3 4 14 2M28 13q0 13-12 15" stroke="#9fd2ff" />
        <circle cx="15" cy="8" r="3.500" fill="#fff" /><circle cx="8.500" cy="20" r="3.500" fill="#fff" /><circle cx="21.500" cy="20" r="3.500" fill="#fff" />
      </Ico>
    ),
  },
  { label: "SOLIDWORKS 2017", icon: swCube },
  {
    label: "Opera",
    icon: <Ico className="h-7 w-[29px]" box="0 0 29 28"><path d="M14.500 0a14 14 0 1 0 0 28 14 14 0 0 0 0-28zm0 4c4.500 0 5.500 5 5.500 10s-1 10-5.500 10-5.500-5-5.500-10 1-10 5.500-10z" fill="#f0141f" fillRule="evenodd" /><path d="M20 1.500A14 14 0 0 1 20 26.500Q22 20 22 14T20 1.500z" fill="#b00d16" /></Ico>,
  },
  {
    label: "Chrome",
    icon: (
      <Ico className="size-7" box="0 0 28 28">
        <circle cx="14" cy="14" r="14" fill="#fff" />
        <path d="M14 14L1.900 7A14 14 0 0 1 26.100 7H14z" fill="#db4437" />
        <path d="M14 14h12.500L26.100 7A14 14 0 0 1 14 28l6-10.500z" fill="#ffcd40" />
        <path d="M1.900 7A14 14 0 0 0 14 28l6-10.500H8z" fill="#0f9d58" />
        <circle cx="14" cy="14" r="6.500" fill="#fff" /><circle cx="14" cy="14" r="5" fill="#4285f4" />
      </Ico>
    ),
  },
  {
    label: "TeamViewer",
    icon: (
      <Ico className="size-[30px]" box="0 0 30 30">
        <path d="M0 0h30v30H0z" fill="#0b7fe0" />
        <circle cx="15" cy="15" r="12.500" fill="#fff" />
        <path d="M3.500 15l7-5v3.500h9V10l7 5-7 5v-3.500h-9V20z" fill="#0b6fcf" />
      </Ico>
    ),
  },
  { label: "SOLIDWORKS", icon: swCube, active: true },
];

const Taskbar = () => (
  <footer className="flex h-[50px] shrink-0 items-stretch bg-[#191413] text-white">
    <button aria-label="Start" className="flex w-[60px] items-center justify-center">
      <Ico><path d="M0 3l8.500-1.300V9.500H0zM9.500 1.500L20 0v9.500H9.500zM0 10.500h8.500v7.800L0 17zM9.500 10.500H20V20L9.500 18.500z" fill="#fff" /></Ico>
    </button>
    <label className="flex w-[430px] items-center border-t border-[#c8c8c8] bg-[#f1f1f1] pl-[11px]">
      <svg viewBox="0 0 28 28" className="size-7 shrink-0" fill="none" aria-hidden="true"><circle cx="14" cy="14" r="12" stroke="#000" strokeWidth="3" /></svg>
      <input aria-label="Type here to search" placeholder="Type here to search" className="min-w-0 flex-1 bg-transparent pl-[11px] text-[16px] outline-none placeholder:text-[#3c3c3c]" />
      <Ico className="mr-4 size-5"><rect x="6.500" y="1" width="7" height="12" rx="2" stroke="#333" strokeWidth="1.400" /><path d="M3 10v3q0 3.500 3.500 3.500h7Q17 16.500 17 13v-3M10 17v2.500M6.500 19.300h7" stroke="#333" strokeWidth="1.400" /></Ico>
    </label>
    {taskbarApps.map((app) => (
      <button
        key={app.label}
        aria-label={app.label}
        className={`flex w-[62px] items-center justify-center ${app.active ? "border-b-[3px] border-[#76b9ed] bg-[#4a4645]" : ""}`}
      >
        {app.icon}
      </button>
    ))}
    <div className="ml-auto flex items-center text-[14px]">
      <button aria-label="People" className="w-[46px]">
        <Ico><circle cx="12.500" cy="5" r="3.500" stroke="#fff" strokeWidth="1.400" /><circle cx="6" cy="10" r="3" stroke="#fff" strokeWidth="1.400" /><path d="M1 18q1-5 5-5t5 5M11 9q6-1 7 5" stroke="#fff" strokeWidth="1.400" /></Ico>
      </button>
      <button aria-label="Hidden icons" className="w-7">
        <Ico className="h-5 w-4" box="0 0 16 20"><path d="M1 14l7-7 7 7" stroke="#fff" strokeWidth="1.400" /></Ico>
      </button>
      <button aria-label="Battery" className="w-8">
        <Ico><path d="M5 6h12v8H4v-4" stroke="#fff" strokeWidth="1.300" /><path d="M17.500 8.500h2v3h-2zM8 8h5v4H8z" fill="#fff" /><path d="M1 3v4h4V3M3 7v3" stroke="#fff" strokeWidth="1.300" /></Ico>
      </button>
      <button aria-label="Wi-Fi" className="w-7">
        <Ico className="size-[18px]"><path d="M2 18Q2 3 18 3M6 18Q6 8 18 8M10 18q0-6 8-6" stroke="#ddd" strokeWidth="1.400" /><circle cx="16" cy="17" r="2" fill="#fff" /></Ico>
      </button>
      <button aria-label="Volume" className="w-[34px]">
        <Ico className="h-5 w-[22px]" box="0 0 22 20"><path d="M1 7h3l4-4v14l-4-4H1zM11 7q2 3 0 6M14 5q3.500 5 0 10M17 3q5 7 0 14" stroke="#fff" strokeWidth="1.300" /></Ico>
      </button>
      <span className="w-8">ENG</span>
      <div className="flex w-[92px] flex-col items-center text-[14px] leading-[23px]">
        <span>12:01 AM</span>
        <span>26-Sep-18</span>
      </div>
      <button aria-label="3 notifications" className="relative ml-3 w-[45px]">
        <Ico><path d="M0 1h20v15h-7v4l-4-4H0z" fill="#fff" /><path d="M4 5h12M4 8.500h12M4 12h8" stroke="#222" strokeWidth="1.200" /></Ico>
        <span className="absolute top-2 left-[9px] flex size-5 items-center justify-center rounded-full border border-[#999] bg-[#333] text-[13px] font-bold">3</span>
      </button>
      <span className="mr-[5px] h-[50px] w-px bg-[#666]" />
    </div>
  </footer>
);

const App = () => (
  <div className="flex min-h-screen flex-col overflow-hidden bg-[#f7f7f7] font-['Open_Sans','Noto_Sans',sans-serif] text-black">
    <TitleBar />
    <div className="flex h-[87px] shrink-0 items-start gap-[10px] border-b border-[#808080] bg-[#f7f7f7] pt-[18px] pl-[11px]">
      {editCommands.map((cmd) => (
        <RibbonButton key={cmd.lines.join(" ")} {...cmd} />
      ))}
      <span className="-mx-1 -mt-3 h-[78px] w-px bg-[#c3c3c3]" />
      {renderCommands.map((cmd) => (
        <RibbonButton key={cmd.lines.join(" ")} {...cmd} />
      ))}
    </div>
    <div className="relative flex flex-1 flex-col">
      <Scene />
      <TabRow />
      <Workspace />
    </div>
    <BottomTabs />
    <StatusBar />
    <Taskbar />
  </div>
);

export default App;
